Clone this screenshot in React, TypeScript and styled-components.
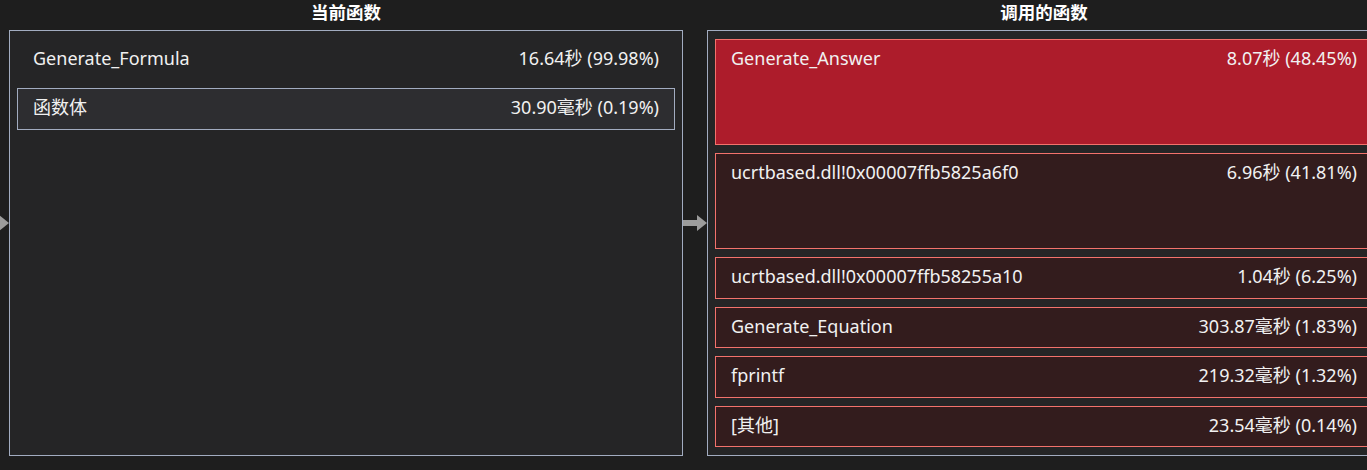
import React from "react";
import styled, { createGlobalStyle } from "styled-components";

const GlobalStyle = createGlobalStyle`
  html, body {
    margin: 0;
    padding: 0;
    background: #1e1e1e;
    overflow: hidden;
  }
  body {
    font-family: "Noto Sans", "Noto Sans CJK SC", sans-serif;
    color: #f1f1f1;
  }
`;

type Tone = "plain" | "body" | "hot" | "callee";

interface IRow {
  name: string;
  value: string;
  tone: Tone;
  height: number;
}

const current: IRow[] = [
  { name: "Generate_Formula", value: "16.64秒 (99.98%)", tone: "plain", height: 41 },
  { name: "函数体", value: "30.90毫秒 (0.19%)", tone: "body", height: 41.5 },
];

const callees: IRow[] = [
  { name: "Generate_Answer", value: "8.07秒 (48.45%)", tone: "hot", height: 106 },
  { name: "ucrtbased.dll!0x00007ffb5825a6f0", value: "6.96秒 (41.81%)", tone: "callee", height: 96 },
  { name: "ucrtbased.dll!0x00007ffb58255a10", value: "1.04秒 (6.25%)", tone: "callee", height: 41.5 },
  { name: "Generate_Equation", value: "303.87毫秒 (1.83%)", tone: "callee", height: 41.5 },
  { name: "fprintf", value: "219.32毫秒 (1.32%)", tone: "callee", height: 41.5 },
  { name: "[其他]", value: "23.54毫秒 (0.14%)", tone: "callee", height: 41.5 },
];

const tones: Record<Tone, { bg: string; border: string }> = {
  plain: { bg: "transparent", border: "transparent" },
  body: { bg: "#2d2d30", border: "#a2acc0" },
  hot: { bg: "#ad1c2b", border: "#f3726c" },
  callee: { bg: "#331c1d", border: "#f3726c" },
};

function Arrow() {
  return (
    <ArrowBox>
      <svg width="24" height="16" viewBox="0 0 24 16">
        <rect x="0" y="5" width="15" height="6" fill="#9c9c9c" />
        <polygon points="14,0 24,8 14,16" fill="#9c9c9c" />
      </svg>
    </ArrowBox>
  );
}

function FunctionPanel({ title, rows }: { title: string; rows: IRow[] }) {
  return (
    <Column>
      <Title>{title}</Title>
      <Panel>
        {rows.map((r) => (
          <Row key={r.name} $tone={r.tone} $h={r.height}>
            <span>{r.name}</span>
            <span>{r.value}</span>
          </Row>
        ))}
      </Panel>
    </Column>
  );
}

export default function App() {
  return (
    <>
      <GlobalStyle />
      <View>
        <Arrow />
        <FunctionPanel title="当前函数" rows={current} />
        <Arrow />
        <FunctionPanel title="调用的函数" rows={callees} />
      </View>
    </>
  );
}

const View = styled.div`
  display: flex;
  margin-left: -15px;
  height: 470px;
  width: 1420px;
`;

const ArrowBox = styled.div`
  width: 24px;
  flex: none;
  display: flex;
  margin-top: 215px;
  align-self: flex-start;
  svg {
    display: block;
  }
`;

const Column = styled.div`
  width: 674px;
  flex: none;
  display: flex;
  flex-direction: column;
`;

const Title = styled.div`
  height: 30px;
  line-height: 24px;
  text-align: center;
  font-size: 17.5px;
  font-weight: 700;
  color: #ffffff;
`;

const Panel = styled.div`
  height: 426px;
  box-sizing: border-box;
  border: 1px solid #a2acc0;
  background: #252526;
  padding: 8px 7px;
  display: flex;
  flex-direction: column;
  gap: 8px;
`;

const Row = styled.div<{ $tone: Tone; $h: number }>`
  box-sizing: border-box;
  height: ${(p) => p.$h}px;
  flex: none;
  background: ${(p) => tones[p.$tone].bg};
  border: 1px solid ${(p) => tones[p.$tone].border};
  padding: 5px 15px 0;
  display: flex;
  justify-content: space-between;
  align-items: flex-start;
  font-size: 18px;
  line-height: 26px;
  white-space: nowrap;
`;
